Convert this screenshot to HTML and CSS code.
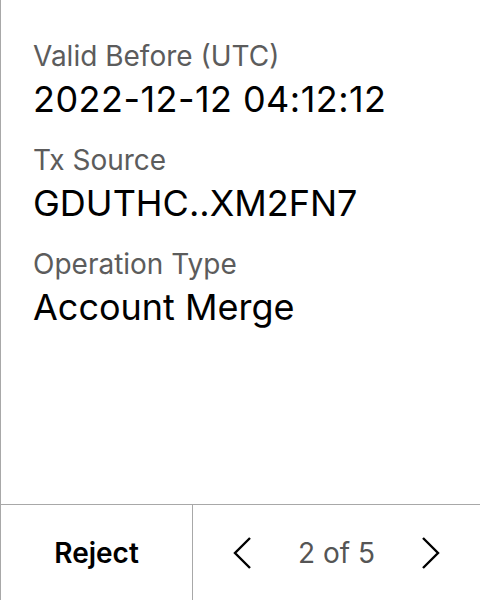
FILE: index.html
```html
<!DOCTYPE html>
<html>
<head>
<meta charset="utf-8">
<link rel="stylesheet" href="styles.css">
</head>
<body>
<div class="screen">
  <div class="details">
    <div class="field">
      <div class="label">Valid Before (UTC)</div>
      <div class="value value-date">2022-12-12 04:12:12</div>
    </div>
    <div class="field">
      <div class="label">Tx Source</div>
      <div class="value">GDUTHC..XM2FN7</div>
    </div>
    <div class="field">
      <div class="label">Operation Type</div>
      <div class="value">Account Merge</div>
    </div>
  </div>
  <div class="footer">
    <div class="reject">Reject</div>
    <div class="pager">
      <svg class="chev" width="20" height="34" viewBox="0 0 20 34"><path d="M18 2 L3 17 L18 32" fill="none" stroke="#000" stroke-width="2.4"/></svg>
      <span class="count">2 of 5</span>
      <svg class="chev" width="20" height="34" viewBox="0 0 20 34"><path d="M2 2 L17 17 L2 32" fill="none" stroke="#000" stroke-width="2.4"/></svg>
    </div>
  </div>
</div>
</body>
</html>
```
FILE: styles.css
```css
html, body {
  margin: 0;
  padding: 0;
  background: #fff;
}
.screen {
  width: 480px;
  height: 600px;
  box-sizing: border-box;
  border-left: 1px solid #a8a8a8;
  display: flex;
  flex-direction: column;
  font-family: Inter, "Noto Sans", sans-serif;
  color: #000;
}
.details {
  flex: 1;
  display: flex;
  flex-direction: column;
  gap: 22px;
  padding: 39px 32px 0 32px;
}
.field {
  display: flex;
  flex-direction: column;
  gap: 4px;
}
.label {
  font-size: 28px;
  line-height: 34px;
  color: #5c5c5c;
}
.value {
  font-size: 36px;
  line-height: 44px;
  color: #000;
}
.value-date {
  letter-spacing: 0.45px;
}
.footer {
  height: 95px;
  flex: none;
  border-top: 1px solid #a8a8a8;
  display: flex;
}
.reject {
  width: 191px;
  border-right: 1px solid #a8a8a8;
  display: flex;
  align-items: center;
  justify-content: center;
  font-size: 28px;
  font-weight: 600;
}
.pager {
  flex: 1;
  display: flex;
  align-items: center;
  justify-content: center;
  gap: 46px;
}
.count {
  font-size: 28px;
  color: #555;
}
.chev {
  display: block;
}
```
